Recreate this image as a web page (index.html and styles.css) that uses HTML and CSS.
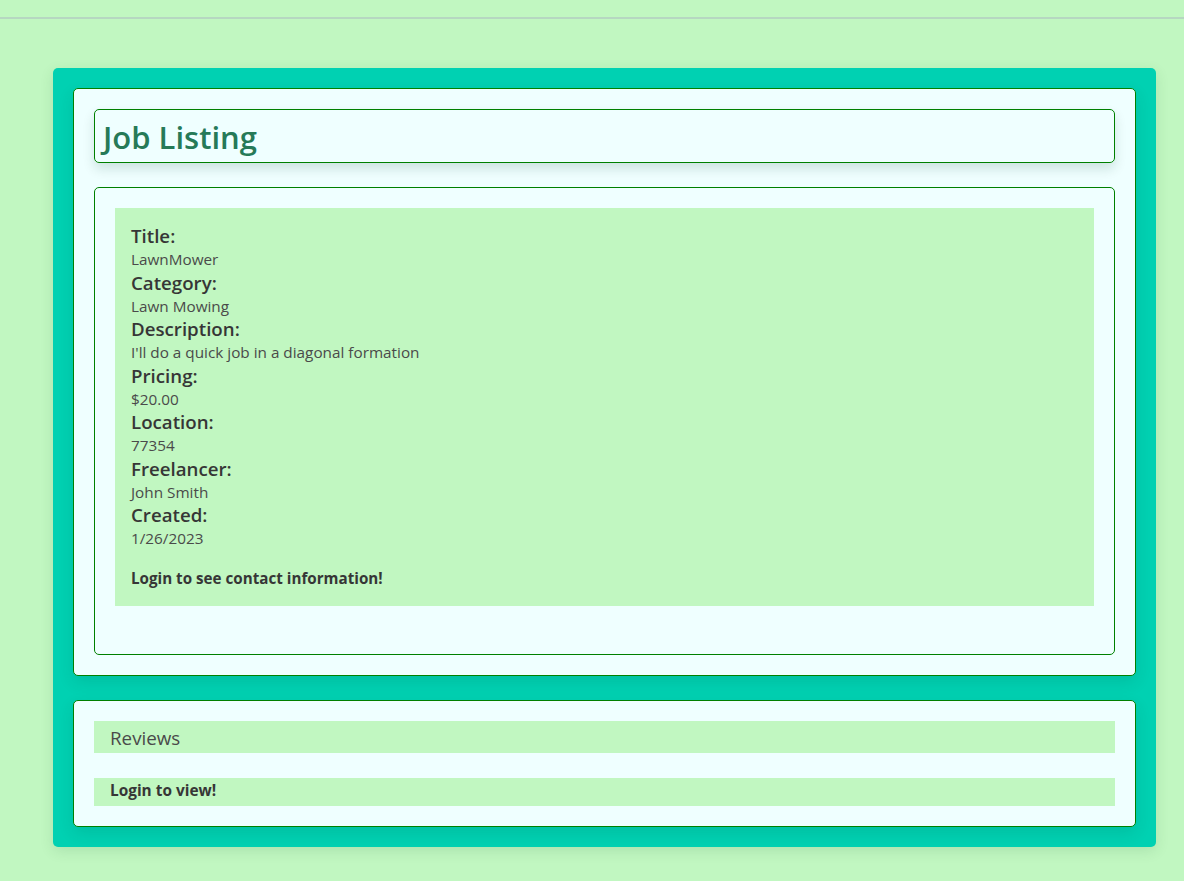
FILE: index.html
```html
<!DOCTYPE html>
<html lang="en">
<head>
<meta charset="utf-8">
<title>Job Listing</title>
<link rel="stylesheet" href="styles.css">
</head>
<body>
<nav class="topbar"></nav>
<main class="outer">
  <section class="card">
    <div class="title-box">
      <h1 class="page-title">Job Listing</h1>
    </div>
    <div class="details-box">
      <div class="details">
        <div class="label">Title:</div>
        <div class="value">LawnMower</div>
        <div class="label">Category:</div>
        <div class="value">Lawn Mowing</div>
        <div class="label">Description:</div>
        <div class="value">I'll do a quick job in a diagonal formation</div>
        <div class="label">Pricing:</div>
        <div class="value">$20.00</div>
        <div class="label">Location:</div>
        <div class="value">77354</div>
        <div class="label">Freelancer:</div>
        <div class="value">John Smith</div>
        <div class="label">Created:</div>
        <div class="value">1/26/2023</div>
        <p class="notice">Login to see contact information!</p>
      </div>
    </div>
  </section>
  <section class="card reviews-card">
    <div class="reviews-head">Reviews</div>
    <div class="reviews-body">Login to view!</div>
  </section>
</main>
</body>
</html>
```
FILE: styles.css
```css
* { box-sizing: border-box; }
html, body {
  margin: 0;
  padding: 0;
}
body {
  background: #c1f7c1;
  font-family: "Open Sans", "Noto Sans", sans-serif;
  color: #4a4a4a;
  min-height: 881px;
}
.topbar {
  height: 19px;
  border-bottom: 2px solid #b6d7c1;
}
.outer {
  margin: 49px 28px 0 53px;
  background: #00d1b2;
  border-radius: 5px;
  padding: 20px;
  box-shadow: 0 4px 14px rgba(0, 80, 40, 0.12);
  display: flex;
  flex-direction: column;
  gap: 24px;
}
.card {
  background: #efffff;
  border: 1px solid #008000;
  border-radius: 5px;
  padding: 20px;
  box-shadow: 0 6px 16px rgba(10, 60, 40, 0.12);
  display: flex;
  flex-direction: column;
  gap: 24px;
}
.title-box {
  border: 1px solid #008000;
  border-radius: 5px;
  height: 54px;
  padding: 0 8px;
  display: flex;
  align-items: center;
  box-shadow: 0 6px 12px rgba(10, 60, 40, 0.14);
}
.page-title {
  margin: 0;
  font-size: 31px;
  font-weight: 600;
  line-height: 1;
  color: #267a58;
  padding-top: 2px;
}
.details-box {
  border: 1px solid #008000;
  border-radius: 5px;
  padding: 20px 20px 48px;
}
.details {
  background: #c1f7c1;
  padding: 16px 16px 17px;
}
.label {
  font-size: 18.7px;
  font-weight: 600;
  line-height: 24px;
  color: #363636;
}
.value {
  font-size: 15.3px;
  line-height: 22.5px;
  color: #4a4a4a;
}
.notice {
  margin: 17px 0 0;
  font-size: 15.2px;
  line-height: 22px;
  font-weight: 700;
  color: #363636;
}
.reviews-card {
  gap: 25px;
}
.reviews-head {
  background: #c1f7c1;
  height: 32px;
  padding: 3px 16px 0;
  display: flex;
  align-items: center;
  font-size: 18.8px;
  font-weight: 400;
  color: #4a4a4a;
}
.reviews-body {
  background: #c1f7c1;
  height: 28px;
  padding: 0 16px 3px;
  display: flex;
  align-items: center;
  font-size: 15.4px;
  font-weight: 700;
  color: #363636;
}
```
